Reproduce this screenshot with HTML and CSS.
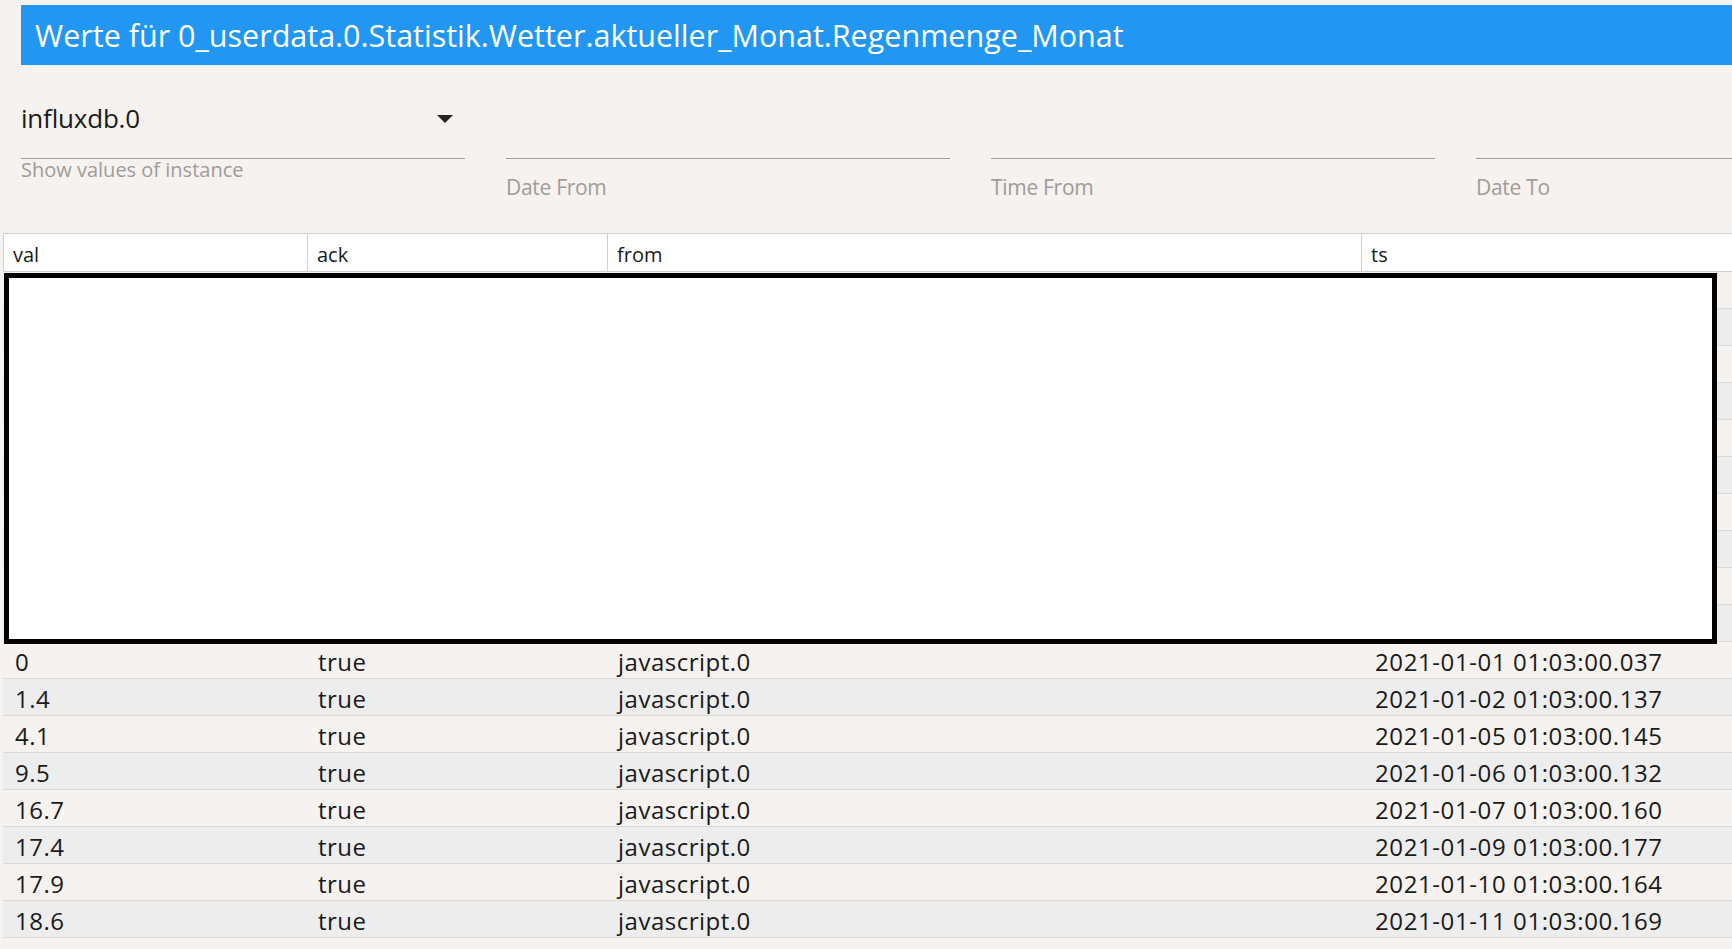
FILE: index.html
```html
<!DOCTYPE html>
<html lang="de">
<head>
    <meta charset="UTF-8">
    <meta name="viewport" content="width=device-width, initial-scale=1.0">
    <title>Werte für 0_userdata.0.Statistik.Wetter.aktueller_Monat.Regenmenge_Monat</title>
    <link rel="stylesheet" href="styles.css">
</head>
<body>
    <h1 class="title-bar">Werte für 0_userdata.0.Statistik.Wetter.aktueller_Monat.Regenmenge_Monat</h1>

    <div class="filters">
        <div class="field">
            <div class="field-input">
                <span class="select-value">influxdb.0</span>
                <svg class="select-arrow" width="16" height="8" viewBox="0 0 16 8">
                    <path d="M0 0 L16 0 L8 8 Z" fill="#222"/>
                </svg>
            </div>
            <div class="helper">Show values of instance</div>
        </div>
        <div class="field">
            <div class="field-input"></div>
            <div class="field-label">Date From</div>
        </div>
        <div class="field">
            <div class="field-input"></div>
            <div class="field-label">Time From</div>
        </div>
        <div class="field">
            <div class="field-input"></div>
            <div class="field-label">Date To</div>
        </div>
    </div>

    <div class="history">
        <div class="grid-row head">
            <div class="cell">val</div>
            <div class="cell">ack</div>
            <div class="cell">from</div>
            <div class="cell">ts</div>
        </div>

        <!-- rows under the chart box -->
        <div class="grid-row"><div class="cell"></div><div class="cell"></div><div class="cell"></div><div class="cell"></div></div>
        <div class="grid-row"><div class="cell"></div><div class="cell"></div><div class="cell"></div><div class="cell"></div></div>
        <div class="grid-row"><div class="cell"></div><div class="cell"></div><div class="cell"></div><div class="cell"></div></div>
        <div class="grid-row"><div class="cell"></div><div class="cell"></div><div class="cell"></div><div class="cell"></div></div>
        <div class="grid-row"><div class="cell"></div><div class="cell"></div><div class="cell"></div><div class="cell"></div></div>
        <div class="grid-row"><div class="cell"></div><div class="cell"></div><div class="cell"></div><div class="cell"></div></div>
        <div class="grid-row"><div class="cell"></div><div class="cell"></div><div class="cell"></div><div class="cell"></div></div>
        <div class="grid-row"><div class="cell"></div><div class="cell"></div><div class="cell"></div><div class="cell"></div></div>
        <div class="grid-row"><div class="cell"></div><div class="cell"></div><div class="cell"></div><div class="cell"></div></div>
        <div class="grid-row"><div class="cell"></div><div class="cell"></div><div class="cell"></div><div class="cell"></div></div>

        <div class="grid-row"><div class="cell">0</div><div class="cell">true</div><div class="cell">javascript.0</div><div class="cell ts">2021-01-01 01:03:00.037</div></div>
        <div class="grid-row"><div class="cell">1.4</div><div class="cell">true</div><div class="cell">javascript.0</div><div class="cell ts">2021-01-02 01:03:00.137</div></div>
        <div class="grid-row"><div class="cell">4.1</div><div class="cell">true</div><div class="cell">javascript.0</div><div class="cell ts">2021-01-05 01:03:00.145</div></div>
        <div class="grid-row"><div class="cell">9.5</div><div class="cell">true</div><div class="cell">javascript.0</div><div class="cell ts">2021-01-06 01:03:00.132</div></div>
        <div class="grid-row"><div class="cell">16.7</div><div class="cell">true</div><div class="cell">javascript.0</div><div class="cell ts">2021-01-07 01:03:00.160</div></div>
        <div class="grid-row"><div class="cell">17.4</div><div class="cell">true</div><div class="cell">javascript.0</div><div class="cell ts">2021-01-09 01:03:00.177</div></div>
        <div class="grid-row"><div class="cell">17.9</div><div class="cell">true</div><div class="cell">javascript.0</div><div class="cell ts">2021-01-10 01:03:00.164</div></div>
        <div class="grid-row"><div class="cell">18.6</div><div class="cell">true</div><div class="cell">javascript.0</div><div class="cell ts">2021-01-11 01:03:00.169</div></div>
        <div class="grid-row"><div class="cell"></div><div class="cell"></div><div class="cell"></div><div class="cell"></div></div>

        <div class="chart-box"></div>
    </div>
</body>
</html>
```

FILE: styles.css
```css
html, body {
    height: 100%;
}

body {
    margin: 0;
    background: #f5f2ef;
    font-family: 'Open Sans', 'Noto Sans', sans-serif;
    color: #1a1a1a;
    overflow: hidden;
}

.title-bar {
    margin: 5px 0 0 21px;
    height: 60px;
    padding-left: 14px;
    background: #2196f3;
    color: #fff;
    font-size: 30.5px;
    font-weight: normal;
    line-height: 61px;
    white-space: nowrap;
    overflow: hidden;
}

.filters {
    display: flex;
    align-items: flex-start;
    gap: 41px;
    padding: 33px 0 34px 21px;
    overflow: hidden;
}

.field {
    width: 444px;
    flex: none;
}

.field-input {
    height: 61px;
    box-sizing: border-box;
    border-bottom: 1px solid #9e9e9e;
    display: flex;
    justify-content: space-between;
    align-items: flex-start;
    padding-right: 12px;
}

.select-value {
    font-size: 26px;
    line-height: 32px;
    margin-top: 4px;
    letter-spacing: -0.2px;
}

.select-arrow {
    margin-top: 17px;
}

.helper {
    font-size: 20px;
    line-height: 20px;
    margin-top: 1px;
    color: #a09c98;
}

.field-label {
    font-size: 21px;
    line-height: 24px;
    margin-top: 16px;
    color: #a09c98;
    letter-spacing: -0.3px;
}

.history {
    position: relative;
    margin-left: 3px;
}

.grid-row {
    display: grid;
    grid-template-columns: 303px 300px 754px 1fr;
    height: 37px;
    box-sizing: border-box;
    border-bottom: 1px solid #d9d9d9;
    font-size: 24px;
    letter-spacing: 0.5px;
}

.grid-row:nth-child(even) {
    background: #f5f2ef;
}

.grid-row:nth-child(odd) {
    background: #ededed;
}

.cell {
    padding: 3px 12px 0;
    line-height: 33px;
    white-space: nowrap;
    overflow: hidden;
}

.cell.ts {
    padding-left: 15px;
    letter-spacing: 0.6px;
}

.grid-row.head {
    height: 39px;
    background: #fff;
    border-top: 1px solid #cfcfcf;
    border-left: 1px solid #cfcfcf;
    border-bottom: 1px solid #cfcfcf;
    font-size: 20px;
    letter-spacing: 0;
}

.grid-row.head .cell {
    padding: 4px 9px 0;
    line-height: 33px;
}

.grid-row.head .cell + .cell {
    border-left: 1px solid #cfcfcf;
}

/* white chart area that sits over the first rows */
.chart-box {
    position: absolute;
    top: 40px;
    left: 1px;
    width: 1713px;
    height: 371px;
    box-sizing: border-box;
    border: 5px solid #000;
    background: #fff;
}
```
